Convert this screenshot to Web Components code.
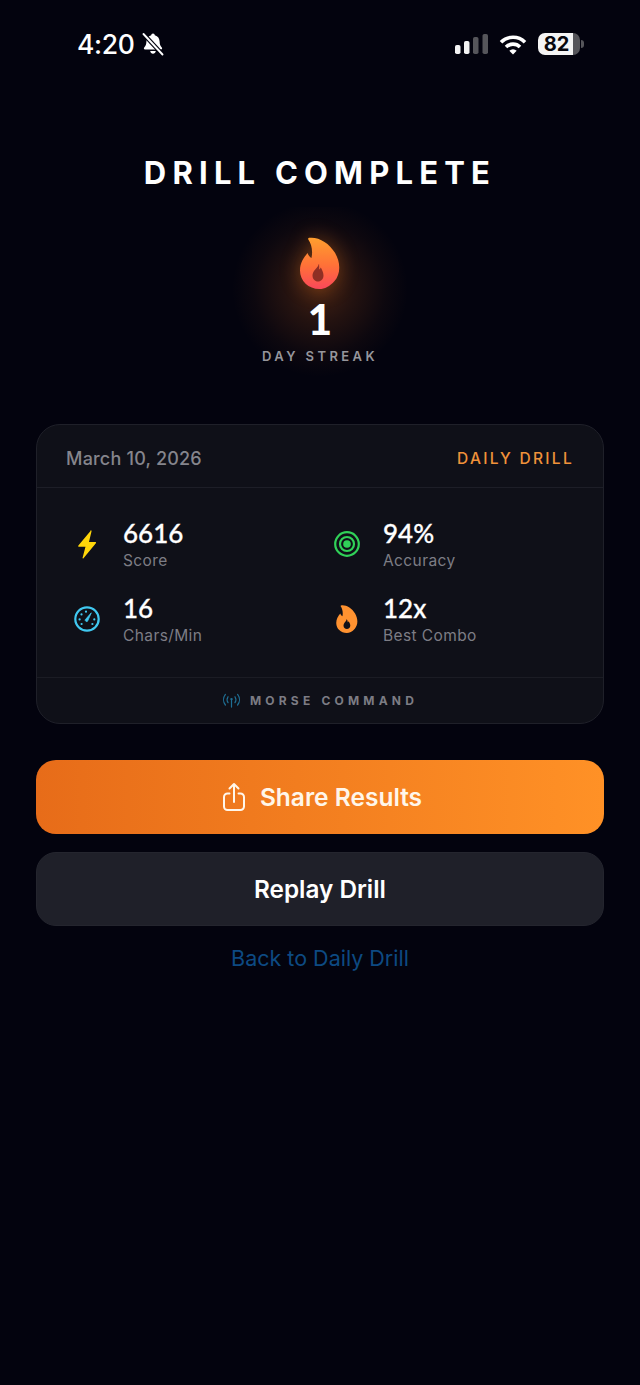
<!DOCTYPE html>
<html>
<head>
<meta charset="utf-8">
<style>
  html, body { margin: 0; padding: 0; height: 100%; background: #03030e; font-family: Inter, "Liberation Sans", sans-serif; }
  body { display: flex; flex-direction: column; height: 1385px; overflow: hidden; }
</style>
</head>
<body>
<status-bar></status-bar>
<streak-header days="1"></streak-header>
<result-card>
  <stat-item slot="stats" value="6616" label="Score">
    <svg slot="icon" viewBox="0 0 24 24" width="28" height="29"><path fill="#ffd60a" d="M15 .5 4.600 12.900c-.4.500-.1 1.100.500 1.100h5.600L8.200 23.300c-.2.600.4.900.8.500l10.600-12.900c.4-.5.100-1.100-.5-1.100h-5.400l2.200-9.200c.1-.7-.5-.9-.9-.6z"/></svg>
  </stat-item>
  <stat-item slot="stats" value="94%" label="Accuracy">
    <svg slot="icon" viewBox="0 0 26 26" width="26" height="26" fill="none" stroke="#30d158" stroke-width="2.200"><circle cx="13" cy="13" r="11.800"/><circle cx="13" cy="13" r="7"/><circle cx="13" cy="13" r="3.800" fill="#30d158" stroke="none"/></svg>
  </stat-item>
  <stat-item slot="stats" value="16" label="Chars/Min">
    <svg slot="icon" viewBox="0 0 26 26" width="26" height="26" fill="none"><circle cx="13" cy="13" r="11.700" stroke="#40c8f0" stroke-width="2.200"/><path d="M11.200 13.800 17.300 6.800l-3.800 8.500a1.500 1.500 0 0 1-2.300-1.500z" fill="#40c8f0" stroke="#40c8f0" stroke-width=".8"/><g fill="#40c8f0"><circle cx="5.600" cy="13.400" r="1.100"/><circle cx="7.500" cy="8.400" r="1.100"/><circle cx="12" cy="5.700" r="1.100"/><circle cx="20.300" cy="13.400" r="1.100"/><circle cx="7.600" cy="18" r="1.100"/><circle cx="18.400" cy="18" r="1.100"/></g></svg>
  </stat-item>
  <stat-item slot="stats" value="12x" label="Best Combo">
    <svg slot="icon" viewBox="0 0 40 52" width="22" height="28"><path fill-rule="evenodd" fill="#ff9230" d="M9 .8c9.500-1.300 20 5 26 15 5.500 9.500 6 20.700-.5 28.200C29.700 49.500 24.700 52 19.500 52 8.500 52 0 44 0 33.500c0-7.500 3.500-12.500 7.500-17.500 1 2.500 2.300 4 4 5C13 14 11.500 7 8.300 2.500 7.800 1.700 8.200 1 9 .8zM19.500 26c-.3 3-2.200 4.500-3.800 6.700-1.400 1.800-2.200 3.700-2.200 5.300 0 3.800 2.800 6.500 6.300 6.500s6.300-2.700 6.300-6.500c0-3.500-1.800-5.500-3-8-.6 1-1.100 1.500-1.800 2 .1-2-.6-4.200-1.800-6z"/></svg>
  </stat-item>
</result-card>
<action-button variant="primary">
  <svg slot="icon" viewBox="0 0 24 30" width="24" height="30" fill="none" stroke="#fff6ea" stroke-width="2" stroke-linecap="round" stroke-linejoin="round"><path d="M7.500 11.500H5.500a3.500 3.500 0 0 0-3.500 3.500v9.500a3.500 3.500 0 0 0 3.500 3.500h13a3.500 3.500 0 0 0 3.500-3.500V15a3.500 3.500 0 0 0-3.500-3.500h-2"/><path d="M12 20V2.500M7.500 6.500 12 2l4.500 4.500"/></svg>
  Share Results
</action-button>
<action-button variant="secondary">Replay Drill</action-button>
<back-link>Back to Daily Drill</back-link>

<script>
class StatusBar extends HTMLElement {
  constructor() {
    super();
    this.attachShadow({mode: "open"}).innerHTML = `
      <style>
        :host { display: flex; align-items: center; justify-content: space-between; height: 28px; padding: 30px 56px 0 77px; color: #fff; }
        .left, .right { display: flex; align-items: center; }
        .time { font: 500 26.500px/28px Inter, "Liberation Sans", sans-serif; letter-spacing: -.3px; }
        .left svg { margin-left: 6px; }
        .right svg + svg { margin-left: 10px; }
        .battery { display: flex; align-items: center; margin-left: 11px; }
        .cell { width: 42px; height: 22px; border-radius: 7px; background: linear-gradient(90deg, #f4f4f4 83%, #55555a 83%); color: #07070d; font: 700 20px/22px Inter, "Liberation Sans", sans-serif; padding-right: 5px; box-sizing: border-box; text-align: center; }
        .nub { width: 3px; height: 8px; margin-left: 1px; border-radius: 0 3px 3px 0; background: #55555a; }
      </style>
      <div class="left">
        <span class="time">4:20</span>
        <svg viewBox="0 0 24 24" width="24" height="24" fill="#fff"><path d="M12 1.500a1.800 1.800 0 0 0-1.800 1.800C7 4.100 5.500 6.700 5.400 9.500c-.1 3-.7 4.500-2.200 6-.7.800-.3 2 .8 2h16c1.100 0 1.500-1.200.8-2-1.500-1.500-2.100-3-2.200-6-.1-2.800-1.600-5.400-4.800-6.200A1.800 1.800 0 0 0 12 1.500zM9.200 19h5.600c-.3 1.700-1.400 2.800-2.800 2.800S9.500 20.700 9.200 19z"/><path d="M2.500 2 21.500 22.500" stroke="#03030e" stroke-width="4.200"/><path d="M2.500 2 21.500 22.500" stroke="#fff" stroke-width="1.900" stroke-linecap="round"/></svg>
      </div>
      <div class="right">
        <svg viewBox="0 0 34 20" width="34" height="20"><rect x="0" y="11" width="5.500" height="9" rx="1.800" fill="#f4f4f4"/><rect x="9" y="7" width="5.500" height="13" rx="1.800" fill="#f4f4f4"/><rect x="18" y="3" width="5.500" height="17" rx="1.800" fill="#55555a"/><rect x="27.500" y="0" width="5.500" height="20" rx="1.800" fill="#55555a"/></svg>
        <svg viewBox="0 0 28 21" width="28" height="21" fill="none" stroke="#fff" stroke-width="3.600"><path d="M2 8.200a17 17 0 0 1 24 0"/><path d="M7 13a10 10 0 0 1 14 0"/><path d="M14 20.500 10.300 16.700a5.300 5.300 0 0 1 7.400 0z" fill="#fff" stroke="none"/></svg>
        <div class="battery"><div class="cell">82</div><div class="nub"></div></div>
      </div>`;
  }
}

class StreakHeader extends HTMLElement {
  constructor() {
    super();
    this.shadow = this.attachShadow({mode: "open"});
  }
  connectedCallback() {
    this.shadow.innerHTML = `
      <style>
        :host { display: flex; flex-direction: column; align-items: center; margin-top: 97px; color: #fff; }
        h1 { margin: 0; font: 700 31px/36px Inter, "Liberation Sans", sans-serif; letter-spacing: 6.200px; }
        .streak { display: flex; flex-direction: column; align-items: center; width: 240px; height: 217px; margin-top: 16px; padding-top: 30px; box-sizing: border-box; background: radial-gradient(circle at 50% 82px, rgba(255,120,30,.25) 0, rgba(255,120,30,.13) 34px, rgba(255,120,30,.04) 66px, rgba(255,120,30,0) 88px); }
        svg { display: block; filter: drop-shadow(0 0 10px rgba(255,130,30,.35)); }
        .count { font: 900 42px/44px Lato, Inter, sans-serif; margin-top: 8px; }
        .label { font: 600 13px/16px Inter, "Liberation Sans", sans-serif; letter-spacing: 3.400px; color: #96969c; margin-top: 7px; }
      </style>
      <h1>DRILL COMPLETE</h1>
      <div class="streak">
        <svg viewBox="0 0 40 52" width="40" height="52">
          <defs><linearGradient id="f" x1="0" y1="0" x2="0" y2="1"><stop offset="0" stop-color="#ff9f2e"/><stop offset=".55" stop-color="#ff7038"/><stop offset="1" stop-color="#f9485a"/></linearGradient></defs>
          <path fill="url(#f)" d="M9 .8c9.500-1.300 20 5 26 15 5.500 9.500 6 20.700-.5 28.200C29.700 49.500 24.700 52 19.500 52 8.500 52 0 44 0 33.500c0-7.500 3.500-12.500 7.500-17.500 1 2.500 2.300 4 4 5C13 14 11.500 7 8.300 2.500 7.800 1.700 8.200 1 9 .8z"/>
          <path fill="#8f2f24" d="M19 26c-.3 3-2.200 4.500-4 6.700-1.500 1.800-2.500 3.700-2.500 5.800 0 3.600 2.500 6 5.500 6s5.500-2.400 5.500-6c0-3.500-1.500-5.500-2.700-8-.5 1-1 1.500-1.600 2 .1-2-.1-4.500-.2-6.500z"/>
        </svg>
        <div class="count">${this.getAttribute("days")}</div>
        <div class="label">DAY STREAK</div>
      </div>`;
  }
}

class ResultCard extends HTMLElement {
  constructor() {
    super();
    this.attachShadow({mode: "open"}).innerHTML = `
      <style>
        :host { display: block; margin: 0 36px; border: 1px solid #1f2029; border-radius: 24px; background: #0f1018; height: 300px; box-sizing: border-box; overflow: hidden; }
        .head { display: flex; justify-content: space-between; align-items: center; height: 63px; padding: 5px 29px 0 29px; border-bottom: 1px solid #1d1e27; font-family: Inter, "Liberation Sans", sans-serif; box-sizing: border-box; }
        .date { font-size: 18px; font-weight: 500; letter-spacing: .2px; color: #85858c; }
        .type { font-size: 15.500px; font-weight: 500; letter-spacing: 2.300px; color: #f0923a; }
        .grid { display: grid; grid-template-columns: 260px 1fr; grid-auto-rows: 75px; height: 190px; padding-top: 30px; padding-left: 30px; box-sizing: border-box; border-bottom: 1px solid #1b1c24; }
        .foot { display: flex; align-items: center; justify-content: center; height: 45px; gap: 9px; }
        .foot span { font: 700 12px/16px Inter, "Liberation Sans", sans-serif; letter-spacing: 4.200px; color: #7c7c84; }
      </style>
      <div class="head"><span class="date">March 10, 2026</span><span class="type">DAILY DRILL</span></div>
      <div class="grid"><slot name="stats"></slot></div>
      <div class="foot">
        <svg viewBox="0 0 20 16" width="19" height="15" fill="none" stroke="#1f6f94" stroke-width="1.300" stroke-linecap="round"><path d="M3.500 1.500c-2.600 3.300-2.600 8 0 11.300M16.500 1.500c2.600 3.300 2.600 8 0 11.300M6.300 4c-1.300 2-1.300 4.300 0 6.300M13.700 4c1.300 2 1.300 4.300 0 6.300M10 7v8"/><circle cx="10" cy="6.500" r="1.300" fill="#1f6f94" stroke="none"/></svg>
        <span>MORSE COMMAND</span>
      </div>`;
  }
}

class StatItem extends HTMLElement {
  constructor() {
    super();
    this.shadow = this.attachShadow({mode: "open"});
  }
  connectedCallback() {
    this.shadow.innerHTML = `
      <style>
        :host { display: flex; align-items: flex-start; font-family: Inter, "Liberation Sans", sans-serif; }
        .icon { width: 40px; height: 52px; display: flex; align-items: center; justify-content: center; margin-right: 16px; flex: none; }
        .value { font: 500 26px/30px Lato, Inter, sans-serif; -webkit-text-stroke: .3px #fff; color: #fff; }
        .label { font-size: 15.500px; line-height: 20px; letter-spacing: .4px; color: #7d7d85; margin-top: 3px; }
      </style>
      <div class="icon"><slot name="icon"></slot></div>
      <div>
        <div class="value">${this.getAttribute("value")}</div>
        <div class="label">${this.getAttribute("label")}</div>
      </div>`;
  }
}

class ActionButton extends HTMLElement {
  constructor() {
    super();
    this.attachShadow({mode: "open"}).innerHTML = `
      <style>
        :host { display: flex; align-items: center; justify-content: center; height: 74px; margin: 0 36px; border-radius: 20px; box-sizing: border-box; font: 600 24.300px/30px Inter, "Liberation Sans", sans-serif; color: #fff; }
        :host([variant="primary"]) { margin-top: 36px; padding-left: 4px; font-size: 24.500px; background: linear-gradient(90deg, #e76c19, #ff9126); color: #fff6ea; }
        :host([variant="secondary"]) { margin-top: 18px; background: #1f2029; border: 1px solid #24252e; }
        ::slotted(svg) { margin-right: 14px; }
      </style>
      <slot name="icon"></slot><slot></slot>`;
  }
}

class BackLink extends HTMLElement {
  constructor() {
    super();
    this.attachShadow({mode: "open"}).innerHTML = `
      <style>
        :host { display: block; margin-top: 18px; text-align: center; font: 400 21.500px/28px Inter, "Liberation Sans", sans-serif; color: #0d4a82; }
      </style>
      <slot></slot>`;
  }
}

customElements.define("status-bar", StatusBar);
customElements.define("streak-header", StreakHeader);
customElements.define("result-card", ResultCard);
customElements.define("stat-item", StatItem);
customElements.define("action-button", ActionButton);
customElements.define("back-link", BackLink);
</script>
</body>
</html>
